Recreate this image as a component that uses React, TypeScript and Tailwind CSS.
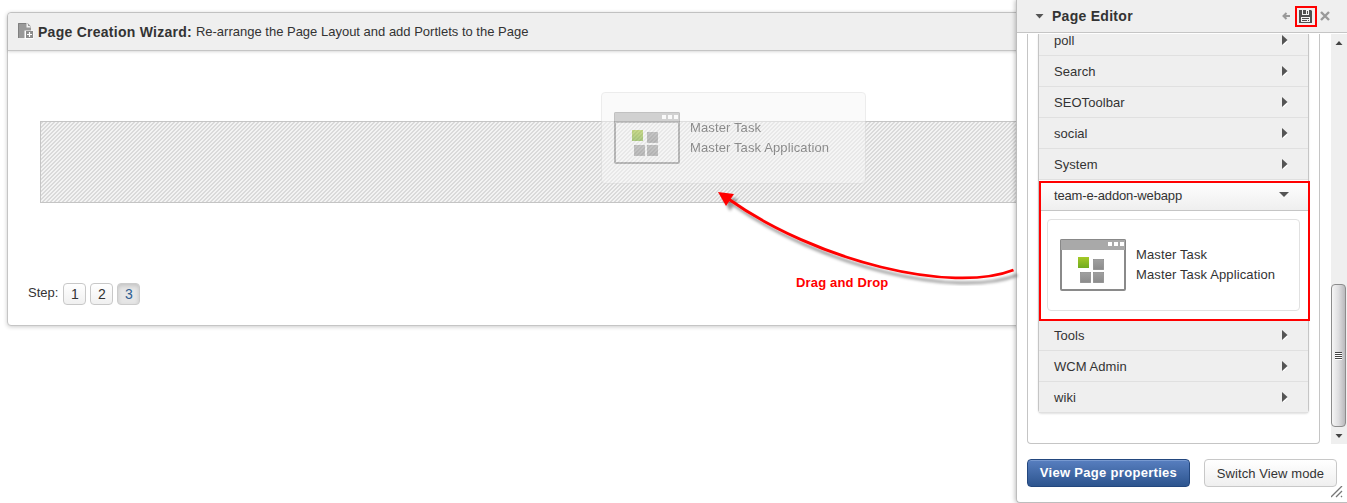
import type { ReactNode } from "react";

function AppIcon({ id }: { id: string }) {
  return (
    <svg width="66" height="52" viewBox="0 0 66 52" className="shrink-0">
      <defs>
        <linearGradient id={id} x1="0" y1="0" x2="0" y2="1">
          <stop offset="0" stopColor="#a5c927" />
          <stop offset="1" stopColor="#70ab1f" />
        </linearGradient>
        <linearGradient id={id + "g"} x1="0" y1="0" x2="0" y2="1">
          <stop offset="0" stopColor="#a0a0a0" />
          <stop offset="1" stopColor="#8b8b8b" />
        </linearGradient>
      </defs>
      <rect x="1" y="1" width="64" height="50" rx="1" fill="#fff" stroke="#8a8a8a" strokeWidth="2" />
      <rect x="1" y="1" width="64" height="10" fill="#a9a9a9" />
      <path d="M.5 11V1.5q0-1 1-1h63q1 0 1 1V11" fill="none" stroke="#888" />
      <path d="M48 3h4v4h-4zM54 3h4v4h-4zM60 3h4v4h-4z" fill="#fff" />
      <rect x="18" y="18" width="11" height="11" fill={"url(#" + id + ")"} />
      <g fill={"url(#" + id + "g)"} stroke="#858585" strokeWidth=".6">
        <rect x="33.3" y="20.3" width="10.4" height="10.4" />
        <rect x="20.3" y="33.3" width="10.4" height="10.4" />
        <rect x="33.3" y="33.3" width="10.4" height="10.4" />
      </g>
    </svg>
  );
}

function AppCard({ id }: { id: string }) {
  return (
    <div className="flex h-full items-center rounded border border-[#e1e1e1] bg-white pl-3">
      <AppIcon id={id} />
      <div className="ml-[10px] leading-5 tracking-[0.12px]">
        <div>Master Task</div>
        <div>Master Task Application</div>
      </div>
    </div>
  );
}

function Row({ children }: { children: ReactNode }) {
  return (
    <div className="flex h-[31px] shrink-0 items-center justify-between border-b border-[#e0e0e0] bg-[#efefef] pt-[2px] pr-[20px] pl-[15px]">
      <span className="tracking-[0.05px]">{children}</span>
      <svg width="6" height="10" viewBox="0 0 6 10" className="-mt-[2px]">
        <path d="M1 2l5 4.500-5 4.500z" fill="#fff" />
        <path d="M0 0L5.500 5 0 10z" fill="#555" />
      </svg>
    </div>
  );
}

function Step({ n, active = false }: { n: number; active?: boolean }) {
  return (
    <span
      className={
        active
          ? "flex h-[22px] w-[23px] items-center justify-center rounded border border-[#ccc] bg-[#e6e6e6] text-[14px] text-[#2f5e92] shadow-[inset_0_2px_4px_rgba(0,0,0,0.15)]"
          : "flex h-[22px] w-[23px] items-center justify-center rounded border border-[#c8c8c8] bg-linear-to-b from-white to-[#f0f0f0] text-[14px]"
      }
    >
      {n}
    </span>
  );
}

function Wizard() {
  return (
    <main className="mt-3 ml-[7px] h-[314px] w-[1030px] rounded border border-[#c5c5c5] bg-white shadow-[0_1px_4px_rgba(0,0,0,0.2)]">
      <header className="flex h-[38px] items-center rounded-t border-b border-[#c5c5c5] bg-[#efefef] pl-[9px] shadow-[0_1px_3px_rgba(0,0,0,0.15)]">
        <svg width="17" height="17" viewBox="0 0 17 17">
          <path d="M1 0h9l4 4v4H8v7H1z" fill="#999" />
          <path d="M1.500 15V.5H9" fill="none" stroke="#808080" />
          <path d="M9.500 0v4.500H14z" fill="#f4f4f4" />
          <path d="M11 .5v2.500h2.500z" fill="#999" />
          <path d="M7.500 7.500H16.500V16H7.500z" fill="#fff" />
          <path d="M9 8h7v7H9z" fill="#8c8c8c" />
          <path d="M12.500 9v5M10 11.500h5" stroke="#fff" strokeWidth="1.200" />
        </svg>
        <h1 className="ml-[4px] text-[14px] font-bold tracking-[0.26px]">Page Creation Wizard:</h1>
        <span className="ml-1">Re-arrange the Page Layout and add Portlets to the Page</span>
      </header>
      <section className="mt-[70px] ml-8 h-[82px] border border-[#c5c5c5] bg-[linear-gradient(135deg,#dadada_25%,#f3f3f3_25%,#f3f3f3_50%,#dadada_50%,#dadada_75%,#f3f3f3_75%)] bg-[length:4px_4px]" />
      <footer className="mt-20 ml-5 flex items-center gap-1">
        <span className="-mt-[2px] mr-px">Step:</span>
        <Step n={1} />
        <Step n={2} />
        <Step n={3} active />
      </footer>
    </main>
  );
}

function Editor() {
  return (
    <aside className="absolute top-0 left-[1016px] flex h-[503px] w-[331px] flex-col rounded-bl border-b border-l border-[#bdbdbd] bg-white shadow-[-1px_0_4px_rgba(0,0,0,0.25)]">
      <header className="flex h-[33px] shrink-0 items-center border-b border-[#c5c5c5] bg-[#efefef] pl-[18px]">
        <svg width="9" height="5" viewBox="0 0 9 5">
          <path d="M.5 0h8L4.500 4.500z" fill="#555" />
        </svg>
        <h2 className="ml-2 text-[14px] font-bold tracking-[0.28px]">Page Editor</h2>
        <svg width="9" height="8" viewBox="0 0 9 8" className="ml-auto">
          <path d="M8 4H2M4.500 1L1.500 4l3 3" fill="none" stroke="#999" strokeWidth="2" />
        </svg>
        <span className="ml-1 flex h-[21px] w-[22px] items-center justify-center border-2 border-[#f00]">
          <svg width="13" height="13" viewBox="0 0 13 13" className="mr-px">
            <path d="M0 0h12l1 1v12H0z" fill="#505050" />
            <path d="M3 0h7v5H3zM2 7h9v5H2z" fill="#f4f4f4" />
            <path d="M4 0h3v4H4zM8 1h1v3H8zM3 8h7v1H3zM3 10h5v1H3zM9 10h1v1H9z" fill="#505050" />
          </svg>
        </span>
        <svg width="10" height="10" viewBox="0 0 10 10" className="mr-[17px] ml-[3px]">
          <path d="M1 1l8 8M9 1L1 9" stroke="#999" strokeWidth="2.400" />
        </svg>
      </header>
      <div className="mt-px flex h-[410px] shrink-0 justify-between">
        <div className="ml-[10px] h-full w-[293px] rounded-b border border-t-0 border-[#c5c5c5] px-[10px]">
          <div className="relative flex h-[379px] flex-col rounded-b border border-t-0 border-[#c5c5c5] shadow-[0_1px_2px_rgba(0,0,0,0.12)]">
            <div className="flex h-[146px] shrink-0 flex-col justify-end overflow-hidden">
              <Row>poll</Row>
              <Row>Search</Row>
              <Row>SEOToolbar</Row>
              <Row>social</Row>
              <Row>System</Row>
            </div>
            <div className="flex h-[31px] shrink-0 items-center justify-between border-b border-[#c5c5c5] bg-linear-to-b from-white to-[#efefef] pt-px pr-[19px] pl-[15px]">
              <span className="tracking-[-0.15px]">team-e-addon-webapp</span>
              <svg width="10" height="5" viewBox="0 0 10 5" className="-mt-[3px]">
                <path d="M0 0h10L5 5z" fill="#555" />
              </svg>
            </div>
            <div className="h-[109px] shrink-0 px-2 pt-2 pb-[9px]">
              <AppCard id="pa" />
            </div>
            <Row>Tools</Row>
            <Row>WCM Admin</Row>
            <Row>wiki</Row>
            <div className="pointer-events-none absolute top-[147px] -right-[2px] left-0 h-[140px] border-2 border-[#f00]" />
          </div>
        </div>
        <div className="flex h-full w-4 flex-col bg-[#efefef]">
          <svg width="16" height="250" viewBox="0 0 16 250">
            <path d="M4.500 11L8 7l3.500 4z" fill="#444" />
          </svg>
          <div className="flex h-[143px] w-[15px] flex-col items-center justify-center gap-px rounded-sm border border-[#8c8c8c] bg-linear-to-r from-[#f6f6f6] via-[#dedee0] to-[#b9b9bc] pr-px">
            <i className="h-px w-[7px] bg-[#444] shadow-[0_1px_#fff]" />
            <i className="h-px w-[7px] bg-[#444] shadow-[0_1px_#fff]" />
            <i className="h-px w-[7px] bg-[#444] shadow-[0_1px_#fff]" />
            <i className="h-px w-[7px] bg-[#444] shadow-[0_1px_#fff]" />
          </div>
          <svg width="16" height="17" viewBox="0 0 16 17">
            <path d="M4.500 7h7L8 11z" fill="#444" />
          </svg>
        </div>
      </div>
      <footer className="mt-[15px] flex pl-[10px]">
        <button className="h-7 w-[163px] rounded border border-[#23477e] bg-linear-to-b from-[#587fc0] to-[#2d558f] font-bold tracking-[0.3px] text-white shadow-[inset_0_1px_#7799d0]">
          View Page properties
        </button>
        <button className="ml-[14px] h-7 w-[133px] rounded border border-[#c8c8c8] bg-linear-to-b from-white to-[#efefef] pt-px tracking-[0.08px]">
          Switch View mode
        </button>
      </footer>
      <svg width="12" height="12" viewBox="0 0 12 12" className="absolute right-1 bottom-[4px]">
        <path d="M0 11L11 0M5 11l6-6M10 11l1-1" stroke="#777" strokeWidth="1.300" />
      </svg>
    </aside>
  );
}

export default function App() {
  return (
    <div className="relative flex h-[503px] w-[1347px] overflow-hidden bg-white font-['Liberation_Sans',Arial,sans-serif] text-[13px] leading-5 text-[#333]">
      <Wizard />
      <div className="absolute top-[92px] left-[601px] h-[92px] w-[265px] opacity-50">
        <div className="h-full brightness-[.97]">
          <AppCard id="gh" />
        </div>
      </div>
      <Editor />
      <svg width="310" height="100" viewBox="0 0 310 100" className="absolute top-[186px] left-[713px]">
        <defs>
          <filter id="shade" x="-10%" y="-10%" width="125%" height="135%">
            <feDropShadow dx="4" dy="5" stdDeviation="1.500" floodColor="#000" floodOpacity=".4" />
          </filter>
        </defs>
        <g filter="url(#shade)">
          <path d="M14 12C104 76 239 108 300.500 84" fill="none" stroke="#f00" strokeWidth="2.800" />
          <path d="M5 6l16 2-8 12z" fill="#f00" />
        </g>
      </svg>
      <strong className="absolute top-[273px] left-[796px] tracking-[0.16px] text-[#f00]">Drag and Drop</strong>
    </div>
  );
}
